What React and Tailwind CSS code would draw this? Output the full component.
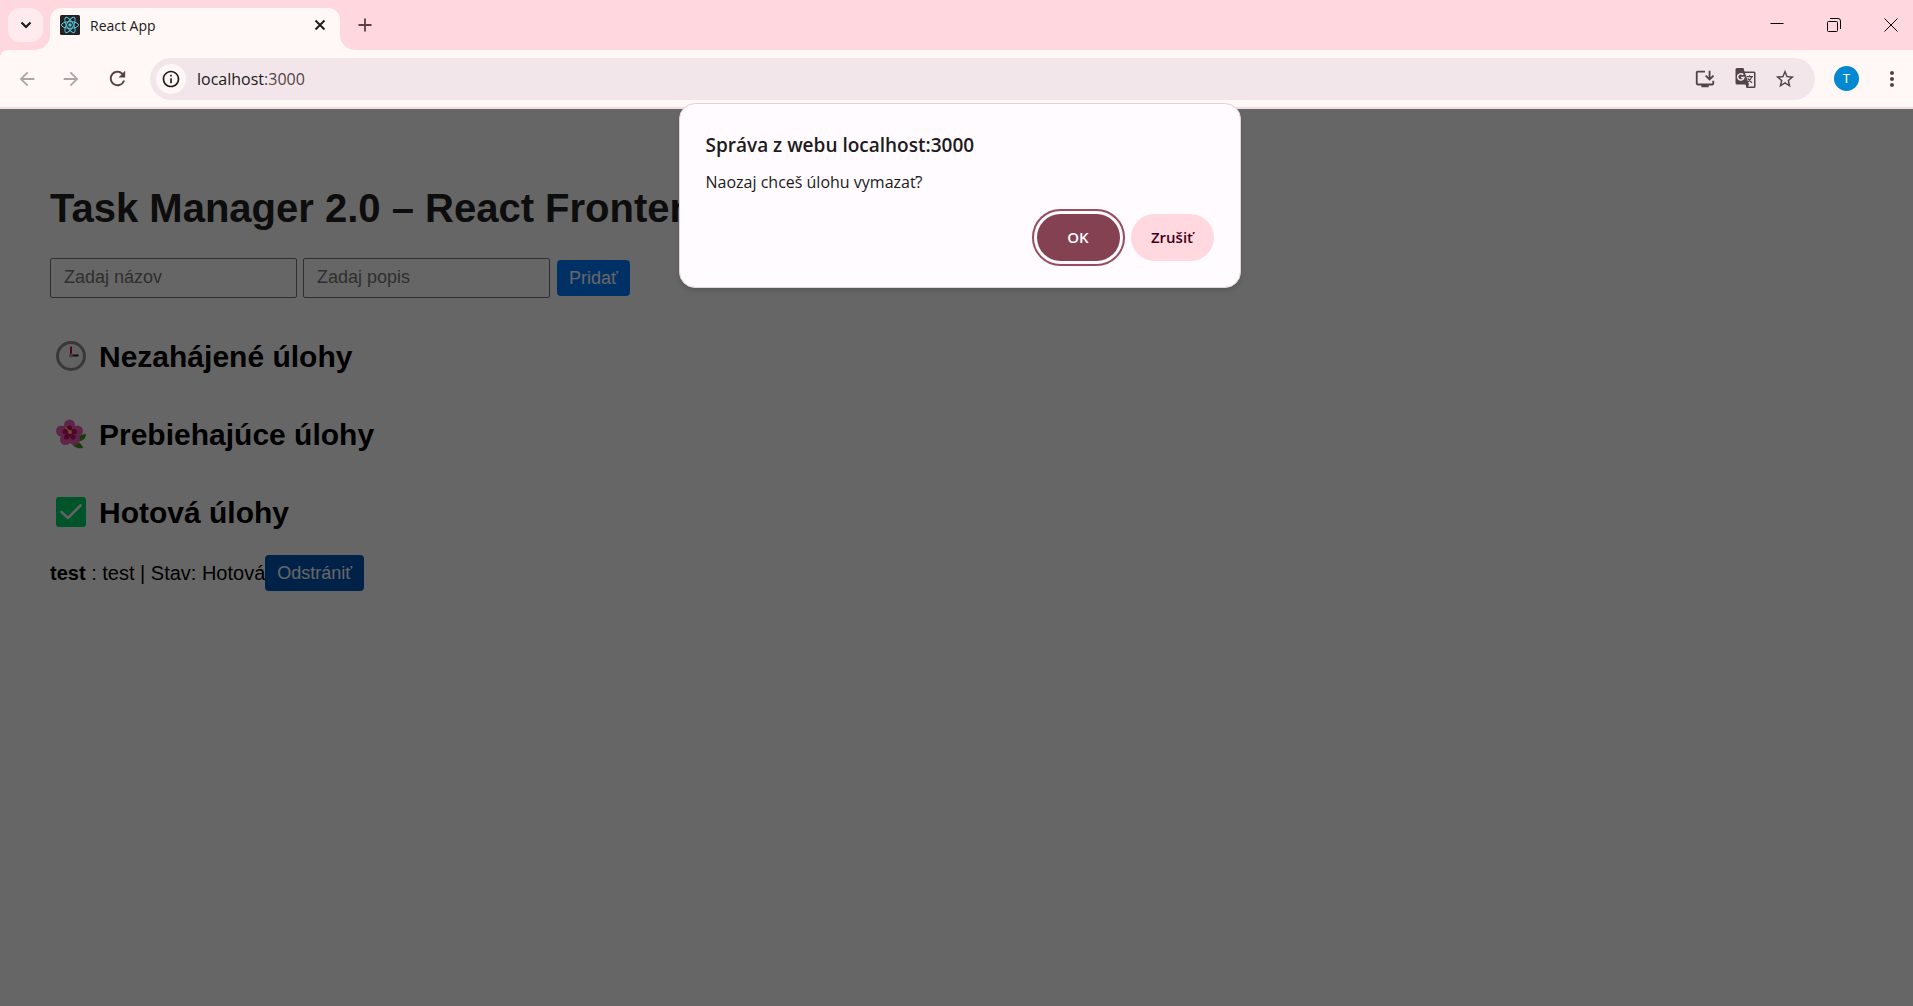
import React from "react";
import {
  MdArrowBack,
  MdArrowForward,
  MdInfoOutline,
  MdMoreVert,
  MdInstallDesktop,
  MdRefresh,
  MdStarBorder,
} from "react-icons/md";

function ReactLogo() {
  return (
    <svg className="size-5 shrink-0" viewBox="0 0 20 20" fill="none" aria-hidden="true">
      <rect width="20" height="20" rx="1.5" fill="#222222" />
      <g stroke="#58c4dc" strokeWidth="1">
        <ellipse cx="10" cy="10" rx="8.6" ry="3.3" />
        <ellipse cx="10" cy="10" rx="8.6" ry="3.3" transform="rotate(60 10 10)" />
        <ellipse cx="10" cy="10" rx="8.6" ry="3.3" transform="rotate(120 10 10)" />
      </g>
      <circle cx="10" cy="10" r="1.7" fill="#58c4dc" />
    </svg>
  );
}

function TranslateIcon() {
  return (
    <svg className="size-[21px]" viewBox="0 0 21 21" fill="none" aria-hidden="true">
      <path d="M2 0h6.500l1 3.500H19a1.500 1.500 0 0 1 1.500 1.500v13.500A1.500 1.500 0 0 1 19 20h-7.500l-1-3.500H2A1.500 1.500 0 0 1 .5 15V1.500A1.500 1.500 0 0 1 2 0Z" fill="currentColor" />
      <path d="M10 5h8.500q.5 0 .5.500v12.500q0 .5-.5.500h-5.500l1-2Z" fill="#f2e6ea" />
      <path d="M8.300 6.800A3.200 3.200 0 1 0 9 9.400H6" stroke="#f2e6ea" strokeWidth="1.500" />
      <path d="M11.500 8.700h6.500M14.500 7.200v1.500M16.800 8.700q-1 3.300-4 5.300M12.800 10.300q1.500 2.700 4.200 4.500" stroke="currentColor" strokeWidth="1.200" />
    </svg>
  );
}

function TabFlare({ className }) {
  return (
    <svg className={className} viewBox="0 0 15 15" aria-hidden="true">
      <path d="M0 15H15V0A15 15 0 0 1 0 15Z" fill="#fff8f7" />
    </svg>
  );
}

function TabStrip() {
  return (
    <div className="flex h-[50px] items-center bg-[#ffd8df] pl-2 text-[#201a1b]">
      <button aria-label="Search tabs" className="mb-[1px] flex h-[34px] w-[35px] items-center justify-center rounded-xl bg-[#ffebee]">
        <svg className="size-3" viewBox="0 0 12 12" fill="none" stroke="currentColor" strokeWidth="2.2">
          <path d="M1.500 3.500 6 8l4.500-4.500" />
        </svg>
      </button>
      <div className="relative ml-[7px] flex h-[42px] w-[290px] items-center self-end rounded-t-xl bg-[#fff8f7] pr-[14px] pb-2 pl-[10px]">
        <TabFlare className="absolute bottom-0 -left-[15px] size-[15px]" />
        <TabFlare className="absolute -right-[15px] bottom-0 size-[15px] -scale-x-100" />
        <ReactLogo />
        <span className="ml-[10px] flex-1 text-[14px]">React App</span>
        <button aria-label="Close tab">
          <svg className="size-3" viewBox="0 0 12 12" fill="none" stroke="currentColor" strokeWidth="1.9">
            <path d="m1.500 1.500 9 9m0-9-9 9" />
          </svg>
        </button>
      </div>
      <button aria-label="New tab" className="ml-[18px] text-[#5b3f44]">
        <svg className="size-[14px]" viewBox="0 0 14 14" fill="none" stroke="currentColor" strokeWidth="1.8">
          <path d="M7 .5v13M.5 7h13" />
        </svg>
      </button>
      <div className="ml-auto flex h-full items-center gap-[13px] text-black">
        <button aria-label="Minimize" className="flex w-11 justify-center">
          <svg className="size-[14px]" viewBox="0 0 14 14" stroke="currentColor">
            <path d="M.5 5.500h13" />
          </svg>
        </button>
        <button aria-label="Restore" className="flex w-11 justify-center">
          <svg className="size-[14px]" viewBox="0 0 14 14" fill="none" stroke="currentColor">
            <rect x=".5" y="3.500" width="10" height="10" rx="1" />
            <path d="M3 .5h8a2.500 2.500 0 0 1 2.500 2.500v8" />
          </svg>
        </button>
        <button aria-label="Close" className="flex w-11 justify-center">
          <svg className="size-[14px]" viewBox="0 0 14 14" fill="none" stroke="currentColor">
            <path d="m.5.500 13 13m0-13-13 13" />
          </svg>
        </button>
      </div>
    </div>
  );
}

function Toolbar() {
  return (
    <div className="bg-[#ffd8df]">
      <div className="flex h-[59px] items-center rounded-tl-lg border-b-2 border-[#f3dde0] bg-[#fff8f7] pl-[5px] text-[#5b3f44]">
        <button aria-label="Back" disabled className="flex w-11 justify-center text-[#b0a3a5]">
          <MdArrowBack className="size-[22px]" />
        </button>
        <button aria-label="Forward" disabled className="flex w-11 justify-center text-[#b0a3a5]">
          <MdArrowForward className="size-[22px]" />
        </button>
        <button aria-label="Reload" className="flex w-12 justify-center">
          <MdRefresh className="size-[23px]" />
        </button>
        <div className="ml-[9px] flex h-[42px] flex-1 items-center rounded-full bg-[#f2e6ea] pr-[10px] pl-[6px]">
          <button aria-label="Site information" className="flex size-[30px] items-center justify-center rounded-full bg-[#fff8f7] text-[#201a1b]">
            <MdInfoOutline className="size-5" />
          </button>
          <a href="http://localhost:3000" className="ml-[11px] flex-1 text-[16px] text-[#201a1b]">
            localhost<span className="text-[#524346]">:3000</span>
          </a>
          <button aria-label="Install app" className="flex w-10 justify-center text-[#524346]">
            <MdInstallDesktop className="size-[22px]" />
          </button>
          <button aria-label="Translate page" className="flex w-10 justify-center text-[#524346]">
            <TranslateIcon />
          </button>
          <button aria-label="Bookmark" className="flex w-10 justify-center text-[#524346]">
            <MdStarBorder className="size-[22px]" />
          </button>
        </div>
        <button aria-label="Profile" className="ml-[19px] flex size-[25px] items-center justify-center rounded-full bg-[#0288d1] font-['Roboto',sans-serif] text-[13px] text-white">
          T
        </button>
        <button aria-label="Menu" className="ml-[11px] flex w-[43px] justify-center">
          <MdMoreVert className="size-6" />
        </button>
      </div>
    </div>
  );
}

function ClockIcon() {
  return (
    <svg className="size-[30px]" viewBox="0 0 30 30" fill="none" aria-hidden="true">
      <circle cx="15" cy="15" r="13.500" fill="#f4f4f4" stroke="#8c8c90" strokeWidth="3" />
      <path d="M15 5.500v8" stroke="#ca0b4a" strokeWidth="2" />
      <path d="M15 14.500h7.500" stroke="#212121" strokeWidth="2" />
      <circle cx="15" cy="14.500" r="2" fill="#9b9b9b" />
    </svg>
  );
}

function FlowerIcon() {
  return (
    <svg className="size-[30px]" viewBox="0 0 30 30" aria-hidden="true">
      <path d="M15 22c4 0 11 1 12 7-6 1-10-1-12-7Z" fill="#44911b" />
      <path d="M20 22c1-4 5-7 10-7 0 5-4 8-10 7Z" fill="#44911b" />
      <g fill="#e860b4">
        <circle cx="13.500" cy="6" r="5.500" />
        <circle cx="5.500" cy="12" r="5.500" />
        <circle cx="21.500" cy="12" r="5.500" />
        <circle cx="9.500" cy="20.500" r="5.500" />
        <circle cx="18.500" cy="20.500" r="5.500" />
        <circle cx="13.500" cy="14" r="6" />
      </g>
      <g fill="#ca0b6e">
        <circle cx="13.500" cy="9" r="2.600" />
        <circle cx="9" cy="12.500" r="2.600" />
        <circle cx="18.500" cy="12.500" r="2.600" />
        <circle cx="10.500" cy="18" r="2.600" />
        <circle cx="17" cy="18" r="2.600" />
        <circle cx="13.500" cy="13.500" r="4.600" />
      </g>
      <path d="m9.500 8.500 4 4" stroke="#ffc94d" strokeWidth="1.300" />
      <circle cx="14" cy="13" r="2" fill="#ffdb5c" />
    </svg>
  );
}

function CheckIcon() {
  return (
    <svg className="size-[30px]" viewBox="0 0 30 30" fill="none" aria-hidden="true">
      <rect width="30" height="30" rx="3" fill="#00d26a" />
      <path d="m5.500 15 6.500 6L24.500 8.500" stroke="#f4f4f4" strokeWidth="2.600" strokeLinecap="round" strokeLinejoin="round" />
    </svg>
  );
}

function SectionHeading({ icon, children }) {
  return (
    <h2 className="flex h-[78px] items-center gap-[13px] pl-[6px] text-[30px] font-bold">
      {icon}
      {children}
    </h2>
  );
}

function TextField({ placeholder }) {
  return (
    <input
      aria-label={placeholder}
      placeholder={placeholder}
      className="h-10 w-[247px] rounded-xs border border-[#767676] bg-white px-[13px] pb-[2px] text-[18px] placeholder:text-[#757575]"
    />
  );
}

function TaskPage() {
  return (
    <main className="flex-1 px-[50px] pt-[76px] font-['Liberation_Sans',Arial,sans-serif] text-black">
      <h1 className="text-[40px] leading-[46px] font-bold text-[#222222]">Task Manager 2.0 – React Frontend</h1>
      <form className="mt-[27px] flex items-center">
        <TextField placeholder="Zadaj názov" />
        <span className="w-[6px]" />
        <TextField placeholder="Zadaj popis" />
        <button type="button" className="ml-[7px] h-9 rounded-sm bg-[#007bff] px-3 text-[18px] leading-9 text-white">
          Pridať
        </button>
      </form>
      <div className="mt-[19px]">
        <SectionHeading icon={<ClockIcon />}>Nezahájené úlohy</SectionHeading>
        <SectionHeading icon={<FlowerIcon />}>Prebiehajúce úlohy</SectionHeading>
        <SectionHeading icon={<CheckIcon />}>Hotová úlohy</SectionHeading>
      </div>
      <div className="mt-1 flex items-center text-[20px]">
        <p>
          <strong>test</strong> : test | Stav: Hotová
        </p>
        <button type="button" className="h-9 rounded-sm bg-[#0056b3] px-3 text-[18px] text-white">
          Odstrániť
        </button>
      </div>
    </main>
  );
}

function ConfirmDialog() {
  return (
    <div
      role="dialog"
      aria-labelledby="dialog-title"
      className="absolute top-[103px] left-1/2 ml-[3px] w-[562px] -translate-x-1/2 rounded-2xl border border-[#e3d3d6] bg-[#fffbff] px-[26px] pt-[27px] pb-[26px] text-[#201a1b] shadow-md"
    >
      <h2 id="dialog-title" className="text-[19px] leading-7 font-semibold">Správa z webu localhost:3000</h2>
      <p className="mt-[11px] text-[16px] leading-6">Naozaj chceš úlohu vymazať?</p>
      <div className="mt-5 flex justify-end gap-[11px] text-[15px] font-semibold">
        <button className="h-[47px] w-[83px] rounded-full bg-[#844152] text-white outline-2 outline-offset-3 outline-[#984c5f]">OK</button>
        <button className="h-[47px] w-[83px] rounded-full bg-[#ffd9df] text-[#3f0017]">Zrušiť</button>
      </div>
    </div>
  );
}

export default function App() {
  return (
    <div className="relative flex min-h-screen flex-col bg-white font-['Open_Sans',sans-serif]">
      <TabStrip />
      <Toolbar />
      <div className="relative flex flex-1 flex-col">
        <TaskPage />
        <div className="absolute inset-0 bg-black/60" />
      </div>
      <ConfirmDialog />
    </div>
  );
}
